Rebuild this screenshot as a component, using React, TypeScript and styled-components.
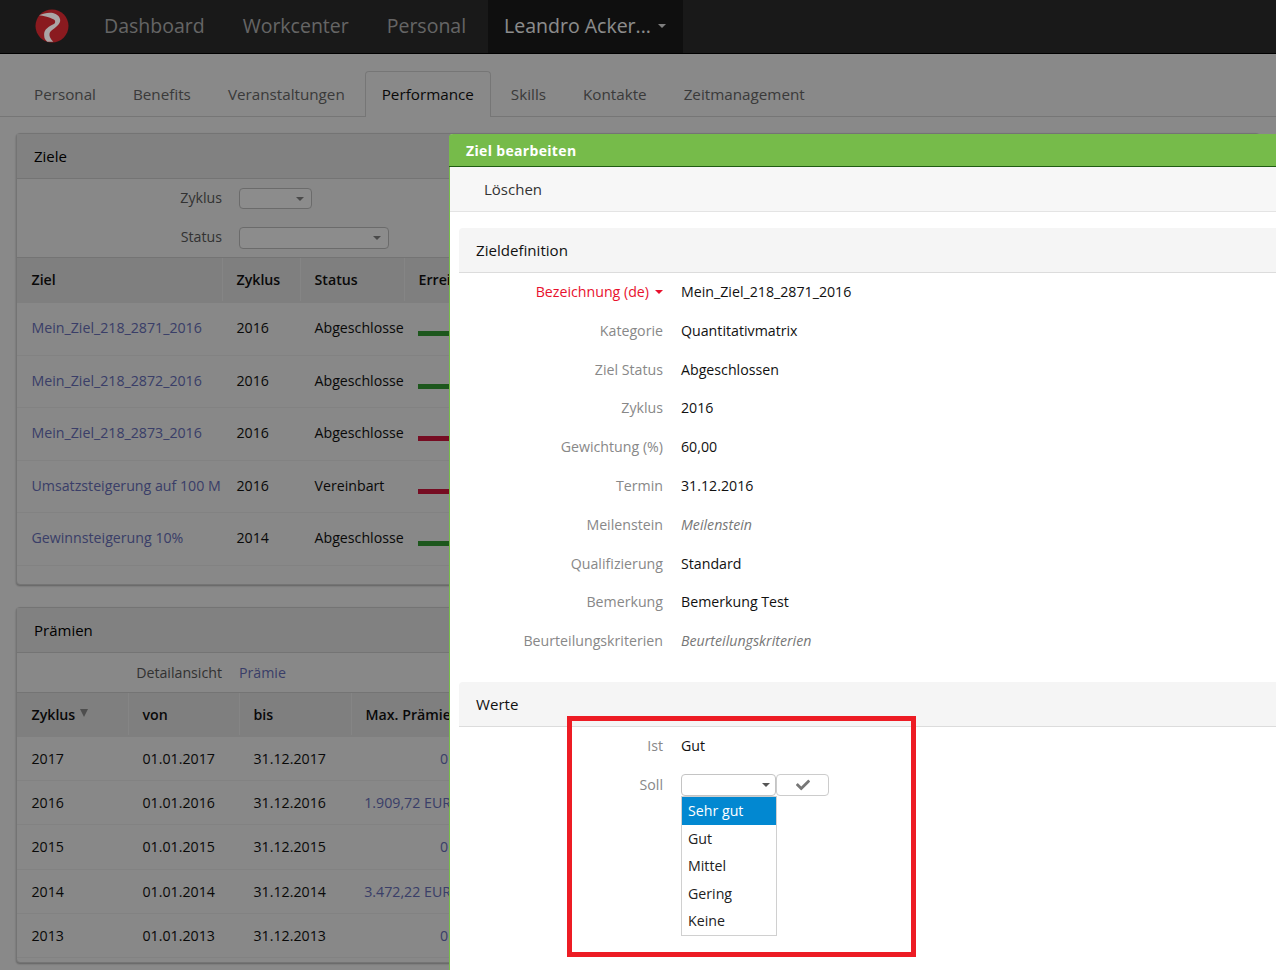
import * as React from 'react';
import styled, { createGlobalStyle } from 'styled-components';
import { FaCheck } from 'react-icons/fa';

const GlobalStyle = createGlobalStyle`
  html, body {
    margin: 0;
    height: 970px;
    overflow: hidden;
    background: #fff;
  }
  * { box-sizing: border-box; }
`;

const Page = styled.div`
  position: relative;
  width: 1276px;
  height: 970px;
  overflow: hidden;
  font-family: 'Open Sans', 'Liberation Sans', sans-serif;
  font-size: 14.2px;
  color: #000;
  background: #fafafa;
`;

const Navbar = styled.nav`
  display: flex;
  height: 54px;
  padding-left: 35px;
  background: #2f2f2f;
  border-bottom: 1px solid #000;
`;

/* sits above the scrim, so its colours are the dimmed ones */
const Logo = styled.svg`
  position: relative;
  z-index: 2;
  width: 34px;
  height: 34px;
  margin: 9px 16px 0 0;
`;

const NavItem = styled.a<{ $active?: boolean }>`
  display: flex;
  align-items: center;
  height: 53px;
  padding: 0 ${p => (p.$active ? '17px' : '19px')} 2px ${p => (p.$active ? '16px' : '19px')};
  margin-left: ${p => (p.$active ? '3px' : '0')};
  font-size: 19.5px;
  color: ${p => (p.$active ? '#fff' : '#b8b8b8')};
  background: ${p => (p.$active ? '#1c1c1c' : 'transparent')};
`;

const Caret = styled.span<{ $color?: string; $size?: number }>`
  display: inline-block;
  width: 0;
  height: 0;
  margin-left: ${p => (p.$size ? '6px' : '7px')};
  border-top: ${p => p.$size || 4}px solid ${p => p.$color || '#e6e6e6'};
  border-left: ${p => p.$size || 4}px solid transparent;
  border-right: ${p => p.$size || 4}px solid transparent;
`;

const TabBar = styled.div`
  display: flex;
  height: 63px;
  padding: 17px 0 0 17px;
  border-bottom: 1px solid #d8d8d8;
`;

const Tab = styled.a<{ $active?: boolean }>`
  height: ${p => (p.$active ? '46px' : '45px')};
  padding: 12px 16px 0;
  margin-right: 3px;
  font-size: 15.22px;
  line-height: 20px;
  color: ${p => (p.$active ? '#111' : '#6a6a6a')};
  background: ${p => (p.$active ? '#fafafa' : 'transparent')};
  border: 1px solid ${p => (p.$active ? '#d8d8d8' : 'transparent')};
  border-bottom: none;
  border-radius: 4px 4px 0 0;
`;

const Panel = styled.section<{ $height: number; $top: number }>`
  width: 1244px;
  height: ${p => p.$height}px;
  margin: ${p => p.$top}px 0 0 16px;
  background: #f7f7f7;
  border: 1px solid #d4d4d4;
  border-radius: 4px;
  box-shadow: 0 1px 2px rgba(0, 0, 0, 0.3);
`;

const PanelHead = styled.header`
  height: 45px;
  padding: 12px 17px 0;
  font-size: 15px;
  line-height: 20px;
  background: #ececec;
  border-bottom: 1px solid #d4d4d4;
`;

const FilterBlock = styled.div`
  border-bottom: 1px solid #d4d4d4;
`;

const FilterRow = styled.div`
  display: flex;
  align-items: center;
  height: 39px;
`;

const FilterLabel = styled.span<{ $lift?: boolean }>`
  width: 205px;
  padding-bottom: ${p => (p.$lift ? '2px' : '0')};
  text-align: right;
  color: #5c5c5c;
`;

const FilterValue = styled.a`
  margin-left: 17px;
  color: #6a72be;
`;

const Select = styled.div<{ $width: number; $height?: number; $left?: number; $pad?: number }>`
  display: flex;
  align-items: center;
  justify-content: flex-end;
  width: ${p => p.$width}px;
  height: ${p => p.$height || 21}px;
  margin-left: ${p => p.$left ?? 17}px;
  padding-right: ${p => p.$pad ?? 7}px;
  background: #fff;
  border: 1px solid #c4c4c4;
  border-radius: 4px;
`;

const TableRow = styled.div<{ $cols: string; $height: number; $head?: boolean; $lift?: boolean }>`
  display: grid;
  grid-template-columns: ${p => p.$cols};
  height: ${p => p.$height}px;
  align-items: center;
  background: ${p => (p.$head ? '#e8e8e8' : 'transparent')};
  border-bottom: ${p => (p.$head ? 'none' : '1px solid #ededed')};
  font-weight: ${p => (p.$head ? 600 : 400)};
  color: #111;
  padding-bottom: ${p => (p.$lift ? '2px' : '0')};
`;

const Cell = styled.div<{ $link?: boolean }>`
  display: flex;
  align-items: center;
  height: 100%;
  padding-left: 14.5px;
  white-space: nowrap;
  color: ${p => (p.$link ? '#6a72be' : '#111')};
`;

const HeadCell = styled.div`
  display: flex;
  align-items: center;
  height: 100%;
  padding-left: 13.5px;
  white-space: nowrap;
  border-left: 1px solid #f3f3f3;

  &:first-child {
    padding-left: 14.5px;
    border-left: none;
  }
`;

const AmountCell = styled.div<{ $inset: number }>`
  display: flex;
  align-items: center;
  justify-content: flex-end;
  height: 100%;
  padding-right: ${p => p.$inset}px;
  white-space: nowrap;
  color: #6a72be;
`;

const Bar = styled.div<{ $color: string }>`
  width: 100px;
  height: 5px;
  margin: 12px 0 0 -0.5px;
  background: ${p => p.$color};
`;

const SortMark = styled.span`
  width: 0;
  height: 0;
  margin: -3px 0 0 5px;
  border-top: 8px solid #8f8f8f;
  border-left: 4px solid transparent;
  border-right: 4px solid transparent;
`;

const Scrim = styled.div`
  position: absolute;
  inset: 0;
  background: rgba(0, 0, 0, 0.45);
`;

const Modal = styled.aside`
  position: absolute;
  top: 134px;
  left: 449px;
  right: -10px;
  bottom: -10px;
  background: #fff;
  border-left: 1px solid #76bb4a;
  border-radius: 4px 0 0 0;
`;

const ModalHead = styled.header`
  height: 33px;
  margin-left: -1px;
  padding: 7px 17px 0;
  font-size: 14px;
  line-height: 20px;
  font-weight: 700;
  letter-spacing: 0.33px;
  color: #fff;
  background: #76bb4a;
  border-bottom: 1px solid #1f5c12;
  border-radius: 4px 0 0 0;
`;

const ModalToolbar = styled.div`
  height: 45px;
  padding: 12px 34px 0;
  font-size: 15px;
  line-height: 20px;
  color: #333;
  background: #f7f7f7;
  border-bottom: 1px solid #e4e4e4;
`;

const FormSection = styled.section<{ $top: number }>`
  margin: ${p => p.$top}px 0 0 9px;
`;

const SectionHead = styled.h3`
  height: 45px;
  margin: 0;
  padding: 12px 17px 0;
  font-size: 15.1px;
  line-height: 20px;
  font-weight: 400;
  color: #111;
  background: #f5f5f5;
  border-bottom: 1px solid #dcdcdc;
  border-radius: 4px 0 0 0;
`;

const FormRow = styled.div`
  display: flex;
  align-items: center;
  height: 38.8px;
  padding-bottom: 1.6px;
`;

const FormLabel = styled.label<{ $error?: boolean }>`
  display: flex;
  align-items: center;
  justify-content: flex-end;
  width: 204px;
  color: ${p => (p.$error ? '#e8112d' : '#888')};
`;

const FormValue = styled.span<{ $placeholder?: boolean }>`
  margin-left: 18px;
  color: ${p => (p.$placeholder ? '#777' : '#111')};
  font-style: ${p => (p.$placeholder ? 'italic' : 'normal')};
`;

const FormControls = styled.div`
  display: flex;
  margin-top: 1px;
`;

const ConfirmButton = styled.button`
  display: flex;
  align-items: center;
  justify-content: center;
  width: 53px;
  height: 22px;
  padding: 0;
  color: #777;
  font-size: 14px;
  background: #fff;
  border: 1px solid #ccc;
  border-radius: 4px;
`;

const Dropdown = styled.ul`
  position: absolute;
  top: 662px;
  left: 231px;
  width: 96px;
  height: 140px;
  margin: 0;
  padding: 0;
  list-style: none;
  background: #fff;
  border: 1px solid #d0d0d0;
`;

const DropdownItem = styled.li<{ $selected?: boolean }>`
  height: 27.5px;
  padding-left: 6px;
  line-height: 27.5px;
  color: ${p => (p.$selected ? '#fff' : '#222')};
  background: ${p => (p.$selected ? '#0288d1' : 'transparent')};
`;

const Annotation = styled.div`
  position: absolute;
  top: 716px;
  left: 567px;
  width: 349px;
  height: 241px;
  border: 5px solid #ed1c24;
  pointer-events: none;
`;

const zielCols = '205px 78px 104px 1fr';
const praemieCols = '111px 111px 112px 1fr';
const praemieBodyCols = '111px 111px 112px 100px';
const GREEN = '#359f35';
const RED = '#d8173f';

const ziele = [
  { name: 'Mein_Ziel_218_2871_2016', year: '2016', status: 'Abgeschlosse', bar: GREEN },
  { name: 'Mein_Ziel_218_2872_2016', year: '2016', status: 'Abgeschlosse', bar: GREEN },
  { name: 'Mein_Ziel_218_2873_2016', year: '2016', status: 'Abgeschlosse', bar: RED },
  { name: 'Umsatzsteigerung auf 100 M', year: '2016', status: 'Vereinbart', bar: RED },
  { name: 'Gewinnsteigerung 10%', year: '2014', status: 'Abgeschlosse', bar: GREEN },
];

const praemien = [
  { year: '2017', max: '0', inset: 3 },
  { year: '2016', max: '1.909,72 EUR', inset: 0 },
  { year: '2015', max: '0', inset: 3 },
  { year: '2014', max: '3.472,22 EUR', inset: 0 },
  { year: '2013', max: '0', inset: 3 },
];

const definition = [
  { label: 'Kategorie', value: 'Quantitativmatrix' },
  { label: 'Ziel Status', value: 'Abgeschlossen' },
  { label: 'Zyklus', value: '2016' },
  { label: 'Gewichtung (%)', value: '60,00' },
  { label: 'Termin', value: '31.12.2016' },
  { label: 'Meilenstein', value: 'Meilenstein', placeholder: true },
  { label: 'Qualifizierung', value: 'Standard' },
  { label: 'Bemerkung', value: 'Bemerkung Test' },
  { label: 'Beurteilungskriterien', value: 'Beurteilungskriterien', placeholder: true },
];

const tabs = ['Personal', 'Benefits', 'Veranstaltungen', 'Performance', 'Skills', 'Kontakte', 'Zeitmanagement'];

export default function App() {
  return (
    <Page>
      <GlobalStyle />
      <Navbar>
        <Logo viewBox="0 0 34 34">
          <circle cx="17" cy="17" r="16.5" fill="#8a1a1f" />
          <path
            d="M4 6.3C8 4.5 11 3.7 15 3.7C19 3.7 23 5.5 24.3 8.3C25.8 11 25.5 13 23.5 15.5C21.5 18 18.3 20.3 16 22C14.3 23.5 14 25.8 15 28.3C15.8 30 17 31.5 18.3 32.7L12.3 32.7C10.5 31 9.3 29.5 9.3 27.7C9 25 9 23.5 10 21.7C11 19.8 13 18.5 15 17C17.5 15.3 20 15 20 13.7C20.5 12 19.8 11 18.3 10.3C16 8.8 14 8.2 11.7 7.7C9 7 6 6.5 4 6.3Z"
            fill="#aaa5a5"
          />
        </Logo>
        <NavItem>Dashboard</NavItem>
        <NavItem>Workcenter</NavItem>
        <NavItem>Personal</NavItem>
        <NavItem $active>
          Leandro Acker...
          <Caret />
        </NavItem>
      </Navbar>
      <TabBar>
        {tabs.map(t => (
          <Tab key={t} $active={t === 'Performance'}>
            {t}
          </Tab>
        ))}
      </TabBar>

      <Panel $top={16} $height={452}>
        <PanelHead>Ziele</PanelHead>
        <FilterBlock>
          <FilterRow>
            <FilterLabel $lift>Zyklus</FilterLabel>
            <Select $width={73}>
              <Caret $color="#888" $size={4} />
            </Select>
          </FilterRow>
          <FilterRow>
            <FilterLabel $lift>Status</FilterLabel>
            <Select $width={150} $height={22}>
              <Caret $color="#888" $size={4} />
            </Select>
          </FilterRow>
        </FilterBlock>
        <TableRow $cols={zielCols} $height={45} $head $lift>
          <HeadCell>Ziel</HeadCell>
          <HeadCell>Zyklus</HeadCell>
          <HeadCell>Status</HeadCell>
          <HeadCell>Erreichung</HeadCell>
        </TableRow>
        {ziele.map(z => (
          <TableRow key={z.name} $cols={zielCols} $height={52.5} $lift>
            <Cell $link>{z.name}</Cell>
            <Cell>{z.year}</Cell>
            <Cell>{z.status}</Cell>
            <Cell>
              <Bar $color={z.bar} />
            </Cell>
          </TableRow>
        ))}
      </Panel>

      <Panel $top={22} $height={356}>
        <PanelHead>Prämien</PanelHead>
        <FilterBlock>
          <FilterRow>
            <FilterLabel>Detailansicht</FilterLabel>
            <FilterValue>Prämie</FilterValue>
          </FilterRow>
        </FilterBlock>
        <TableRow $cols={praemieCols} $height={44} $head $lift>
          <HeadCell>
            Zyklus
            <SortMark />
          </HeadCell>
          <HeadCell>von</HeadCell>
          <HeadCell>bis</HeadCell>
          <HeadCell>Max. Prämie</HeadCell>
        </TableRow>
        {praemien.map(p => (
          <TableRow key={p.year} $cols={praemieBodyCols} $height={44.2}>
            <Cell>{p.year}</Cell>
            <Cell>01.01.{p.year}</Cell>
            <Cell>31.12.{p.year}</Cell>
            <AmountCell $inset={p.inset}>{p.max}</AmountCell>
          </TableRow>
        ))}
      </Panel>

      <Scrim />

      <Modal>
        <ModalHead>Ziel bearbeiten</ModalHead>
        <ModalToolbar>Löschen</ModalToolbar>
        <FormSection $top={16}>
          <SectionHead>Zieldefinition</SectionHead>
          <FormRow>
            <FormLabel $error>
              Bezeichnung (de)
              <Caret $color="#e8112d" $size={4} />
            </FormLabel>
            <FormValue>Mein_Ziel_218_2871_2016</FormValue>
          </FormRow>
          {definition.map(d => (
            <FormRow key={d.label}>
              <FormLabel>{d.label}</FormLabel>
              <FormValue $placeholder={d.placeholder}>{d.value}</FormValue>
            </FormRow>
          ))}
        </FormSection>
        <FormSection $top={21}>
          <SectionHead>Werte</SectionHead>
          <FormRow>
            <FormLabel>Ist</FormLabel>
            <FormValue>Gut</FormValue>
          </FormRow>
          <FormRow>
            <FormLabel>Soll</FormLabel>
            <FormControls>
              <Select $width={95} $height={22} $left={18} $pad={5}>
                <Caret $color="#555" $size={4} />
              </Select>
              <ConfirmButton>
                <FaCheck />
              </ConfirmButton>
            </FormControls>
          </FormRow>
        </FormSection>
        <Dropdown>
          <DropdownItem $selected>Sehr gut</DropdownItem>
          <DropdownItem>Gut</DropdownItem>
          <DropdownItem>Mittel</DropdownItem>
          <DropdownItem>Gering</DropdownItem>
          <DropdownItem>Keine</DropdownItem>
        </Dropdown>
      </Modal>

      <Annotation />
    </Page>
  );
}
